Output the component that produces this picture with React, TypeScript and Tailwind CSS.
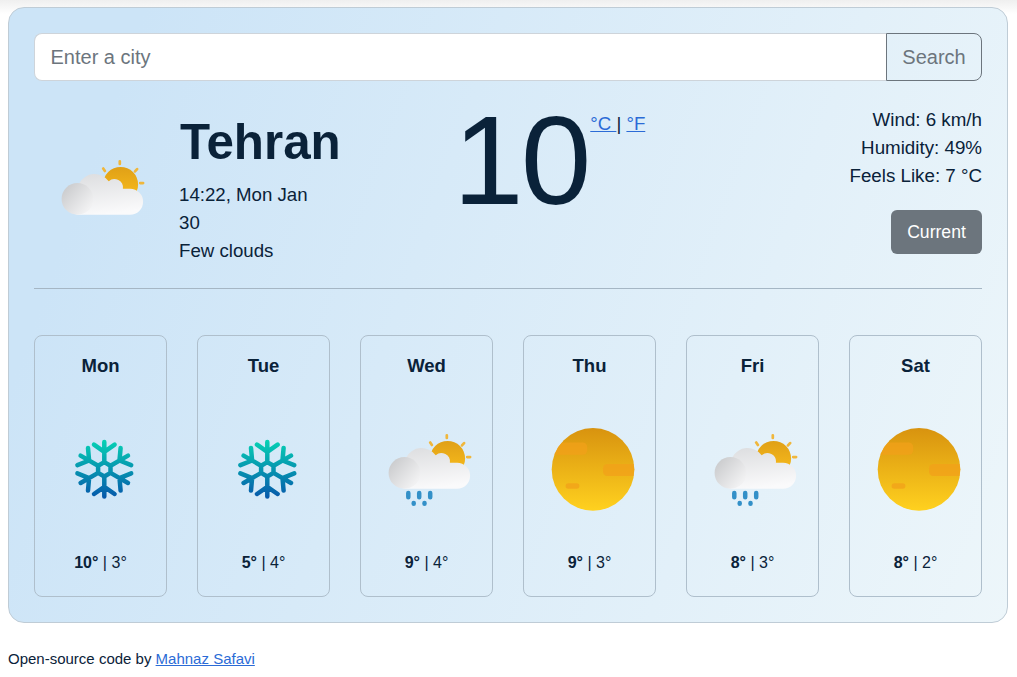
import React from "react";

type Kind = "snow" | "rain" | "sun" | "cloud";

function CloudSun({ rain = false, id }: { rain?: boolean; id: string }) {
  return (
    <g transform="translate(0.4 0)">
      <defs>
        <linearGradient id={`${id}-sun`} x1="0" y1="0" x2="0" y2="1">
          <stop offset="0" stopColor="#e0a017" />
          <stop offset="1" stopColor="#fbbf1c" />
        </linearGradient>
        <linearGradient id={`${id}-body`} gradientUnits="userSpaceOnUse" x1="60" y1="25" x2="66" y2="69">
          <stop offset="0" stopColor="#dcdddf" />
          <stop offset="1" stopColor="#fafafb" />
        </linearGradient>
        <linearGradient id={`${id}-puff`} x1="0.1" y1="0.15" x2="0.85" y2="0.8">
          <stop offset="0" stopColor="#cbccce" />
          <stop offset="1" stopColor="#f1f1f2" />
        </linearGradient>
      </defs>
      <circle cx="86.2" cy="38.4" r="17.5" fill={`url(#${id}-sun)`} />
      <g stroke="#f0b73c" strokeWidth="2.7" strokeLinecap="round">
        <path d="M85.4 15.3v2.7M100.6 25.4l2.1-2.3M105.8 37.1h2.9M70.5 25l-1.7-2.5" />
      </g>
      <path
        d="M42.8 68.7a15.8 15.8 0 0 1 2-31.3a17.4 17.4 0 0 1 29.5 -2.2a8.6 8.6 0 0 1 14.2 7.5h7.2a13 13 0 0 1 0 26z"
        fill={`url(#${id}-body)`}
      />
      <circle cx="43" cy="52.9" r="15.8" fill={`url(#${id}-puff)`} />
      {rain && (
        <g stroke="#3390c8" strokeWidth="4.5" strokeLinecap="round">
          <path d="M46.9 73v4.2M57.8 73v4.2M68.8 73v4.2M52.3 83v.8M63.1 83v.8" />
        </g>
      )}
    </g>
  );
}

function Snow({ id }: { id: string }) {
  return (
    <>
      <defs>
        <linearGradient id={id} gradientUnits="userSpaceOnUse" x1="69" y1="20" x2="69" y2="79">
          <stop offset="0" stopColor="#06d2b4" />
          <stop offset="1" stopColor="#0656ab" />
        </linearGradient>
      </defs>
      <path
        d="M69.3 42.1V22M69.3 31.8L59 24.6M69.3 31.8L79.6 24.6
M75.5 45.7L93 35.6M84.5 40.5L85.6 28M84.5 40.5L96.2 45.2
M75.5 52.9L93 63M84.5 58.1L96.2 53.4M84.5 58.1L85.6 70.6
M69.3 56.5V76.6M69.3 66.8L79.6 74M69.3 66.8L59 74
M63.1 52.9L45.6 63M54.1 58.1L53 70.6M54.1 58.1L42.4 53.4
M63.1 45.7L45.6 35.6M54.1 40.5L42.4 45.2M54.1 40.5L53 28
M69.3 42.1L75.5 45.7V52.9L69.3 56.5L63.1 52.9V45.7Z"
        fill="none"
        stroke={`url(#${id})`}
        strokeWidth="4.5"
        strokeLinecap="round"
        strokeLinejoin="round"
      />
    </>
  );
}

function Sun({ id }: { id: string }) {
  return (
    <>
      <defs>
        <linearGradient id={`${id}-g`} x1="0.5" y1="0" x2="0.5" y2="1">
          <stop offset="0" stopColor="#d8930f" />
          <stop offset="1" stopColor="#ffd11f" />
        </linearGradient>
        <clipPath id={`${id}-c`}>
          <circle cx="69" cy="49.4" r="41.3" />
        </clipPath>
      </defs>
      <circle cx="69" cy="49.4" r="41.3" fill={`url(#${id}-g)`} />
      <g clipPath={`url(#${id}-c)`} fill="#f2a01a" fillOpacity="0.75">
        <rect x="12" y="22.4" width="51.2" height="12.4" rx="4.5" />
        <rect x="79" y="44" width="40" height="12" rx="4.5" />
        <rect x="41.6" y="63.3" width="13.8" height="5.4" rx="2.7" />
      </g>
    </>
  );
}

function WeatherIcon({ kind, id, className = "" }: { kind: Kind; id: string; className?: string }) {
  return (
    <svg viewBox="0 0 131 100" className={`block h-[100px] w-[131px] shrink-0 ${className}`} aria-hidden="true">
      {kind === "snow" && <Snow id={id} />}
      {kind === "sun" && <Sun id={id} />}
      {kind === "rain" && <CloudSun id={id} rain />}
      {kind === "cloud" && <CloudSun id={id} />}
    </svg>
  );
}

const days: { day: string; kind: Kind; max: number; min: number }[] = [
  { day: "Mon", kind: "snow", max: 10, min: 3 },
  { day: "Tue", kind: "snow", max: 5, min: 4 },
  { day: "Wed", kind: "rain", max: 9, min: 4 },
  { day: "Thu", kind: "sun", max: 9, min: 3 },
  { day: "Fri", kind: "rain", max: 8, min: 3 },
  { day: "Sat", kind: "sun", max: 8, min: 2 },
];

export default function App() {
  return (
    <div className="h-[677px] overflow-hidden bg-white bg-[linear-gradient(to_bottom,#efefef,#ffffff_14px)] pt-[7px] pl-2 font-['Liberation_Sans',Arial,sans-serif] text-[#0a2239]">
      <main className="h-[616px] w-[1000px] rounded-2xl border border-[#bfccd6] bg-[linear-gradient(109.6deg,rgb(204,228,247)_11.2%,rgb(237,246,250)_100.2%)] p-[25px]">
        <form className="flex h-12" onSubmit={(e) => e.preventDefault()}>
          <input
            type="text"
            placeholder="Enter a city"
            className="min-w-0 flex-1 rounded-l-lg border border-r-0 border-[#ced4da] bg-white px-[15.5px] text-xl outline-none placeholder:text-[#6c757d]"
          />
          <button className="w-24 rounded-r-lg border border-[#6c757d] text-xl text-[#6c757d]">Search</button>
        </form>

        <section className="flex h-[208px] border-b border-[#a5b6c4] pt-6">
          <WeatherIcon kind="cloud" id="now" className="mt-[41px]" />
          <div className="ml-[14px] w-[150px]">
            <h1 className="pt-2 pl-px text-[49.3px] leading-[58px] font-bold whitespace-nowrap">Tehran</h1>
            <p className="mt-[10px] text-[18.67px] leading-7">
              14:22, Mon Jan
              <br />
              30
              <br />
              Few clouds
            </p>
          </div>
          <div className="ml-[124px] flex">
            <span className="text-[127px] leading-[110px] tracking-[-3px]">10</span>
            <span className="mt-[5px] ml-[2px] text-[18.67px] leading-7 whitespace-pre">
              <a className="text-[#2b6bd6] underline" href="#c">{"°C "}</a>
              {"| "}
              <a className="text-[#2b6bd6] underline" href="#f">°F</a>
            </span>
          </div>
          <div className="ml-auto pt-px text-right text-[18.75px] leading-7">
            <p>Wind: 6 km/h</p>
            <p>Humidity: 49%</p>
            <p>Feels Like: 7 °C</p>
            <button className="mt-5 h-11 w-[91px] rounded-md bg-[#6c757d] text-[17.6px] text-white">Current</button>
          </div>
        </section>

        <section className="mt-[46px] grid grid-cols-6 gap-[30px]">
          {days.map((d) => (
            <article key={d.day} className="flex h-[262px] flex-col rounded-lg border border-[#afbfcc] text-center">
              <h2 className="mt-4 text-[18.5px] leading-7 font-bold">{d.day}</h2>
              <WeatherIcon kind={d.kind} id={`icon-${d.day}`} className="mt-10" />
              <p className="mt-[31px] text-base leading-6">
                <strong>{d.max}°</strong> | {d.min}°
              </p>
            </article>
          ))}
        </section>
      </main>
      <footer className="mt-6 text-[15px] leading-6">
        Open-source code by{" "}
        <a className="text-[#2b6bd6] underline" href="#author">Mahnaz Safavi</a>
      </footer>
    </div>
  );
}
